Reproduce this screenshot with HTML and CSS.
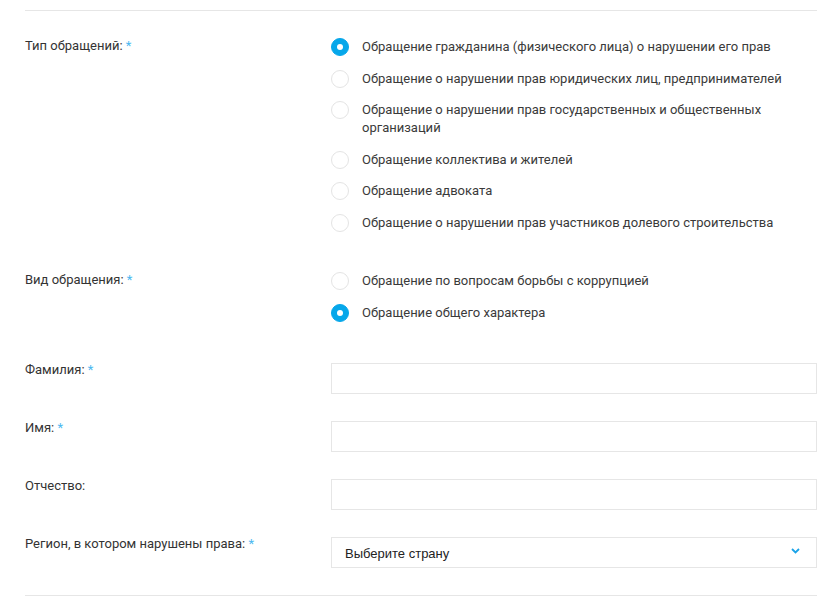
FILE: index.html
```html
<!DOCTYPE html>
<html lang="ru">
<head>
<meta charset="utf-8">
<link rel="stylesheet" href="styles.css">
</head>
<body>
<div class="page">
  <form class="form">
    <div class="row">
      <div class="label">Тип обращений: <span class="req">*</span></div>
      <div class="radios">
        <label class="radio"><span class="dot checked"></span><span class="rtext">Обращение гражданина (физического лица) о нарушении его прав</span></label>
        <label class="radio"><span class="dot"></span><span class="rtext">Обращение о нарушении прав юридических лиц, предпринимателей</span></label>
        <label class="radio"><span class="dot"></span><span class="rtext">Обращение о нарушении прав государственных и общественных организаций</span></label>
        <label class="radio"><span class="dot"></span><span class="rtext">Обращение коллектива и жителей</span></label>
        <label class="radio"><span class="dot"></span><span class="rtext">Обращение адвоката</span></label>
        <label class="radio"><span class="dot"></span><span class="rtext">Обращение о нарушении прав участников долевого строительства</span></label>
      </div>
    </div>
    <div class="row">
      <div class="label">Вид обращения: <span class="req">*</span></div>
      <div class="radios">
        <label class="radio"><span class="dot"></span><span class="rtext">Обращение по вопросам борьбы с коррупцией</span></label>
        <label class="radio"><span class="dot checked"></span><span class="rtext">Обращение общего характера</span></label>
      </div>
    </div>
    <div class="row field">
      <div class="label">Фамилия: <span class="req">*</span></div>
      <div class="input"></div>
    </div>
    <div class="row field">
      <div class="label">Имя: <span class="req">*</span></div>
      <div class="input"></div>
    </div>
    <div class="row field">
      <div class="label">Отчество:</div>
      <div class="input"></div>
    </div>
    <div class="row field">
      <div class="label">Регион, в котором нарушены права: <span class="req">*</span></div>
      <div class="input select">
        <span class="placeholder">Выберите страну</span>
        <svg class="chev" width="9" height="6" viewBox="0 0 9 6"><path d="M1 1 L4.5 4.5 L8 1" fill="none" stroke="#1aa3e8" stroke-width="1.8"/></svg>
      </div>
    </div>
  </form>
</div>
</body>
</html>
```
FILE: styles.css
```css
* { box-sizing: border-box; }
html, body { margin: 0; padding: 0; background: #fff; }
body {
  font-family: Roboto, "Liberation Sans", Arial, sans-serif;
  font-size: 13px;
  color: #3a3a3a;
}
.page {
  padding: 10px 22px 0 25px;
  width: 839px;
}
.form {
  border-top: 1px solid #e6e6e6;
  border-bottom: 1px solid #e6e6e6;
  padding: 27px 0 27px;
  display: flex;
  flex-direction: column;
  gap: 27.2px;
}
.row {
  display: grid;
  grid-template-columns: 306px 1fr;
}
.label {
  line-height: 15px;
  color: #333;
}
.req { color: #4cb8f0; }
.radios {
  display: flex;
  flex-direction: column;
}
.radio {
  display: flex;
  align-items: flex-start;
  line-height: 18.2px;
  margin-bottom: 13.3px;
  color: #3a3a3a;
}
.dot {
  flex: none;
  width: 18px;
  height: 18px;
  border-radius: 50%;
  border: 1px solid #e4e4e4;
  margin-right: 13px;
  position: relative;
  background: #fff;
}
.dot.checked {
  background: #06a7ea;
  border-color: #06a7ea;
}
.dot.checked::after {
  content: "";
  position: absolute;
  left: 5px;
  top: 5px;
  width: 6px;
  height: 6px;
  border-radius: 50%;
  background: #fff;
}
.input {
  height: 31px;
  border: 1px solid #e6e6e6;
  background: #fff;
}
.field .label { margin-top: -1px; }
.select {
  display: flex;
  align-items: center;
  justify-content: space-between;
  padding: 0 16px 0 13px;
}
.placeholder {
  font-family: "Liberation Sans", Arial, sans-serif;
  font-size: 13px;
  color: #222;
  padding-top: 2px;
}
.chev { display: block; margin-top: -3px; }
```
